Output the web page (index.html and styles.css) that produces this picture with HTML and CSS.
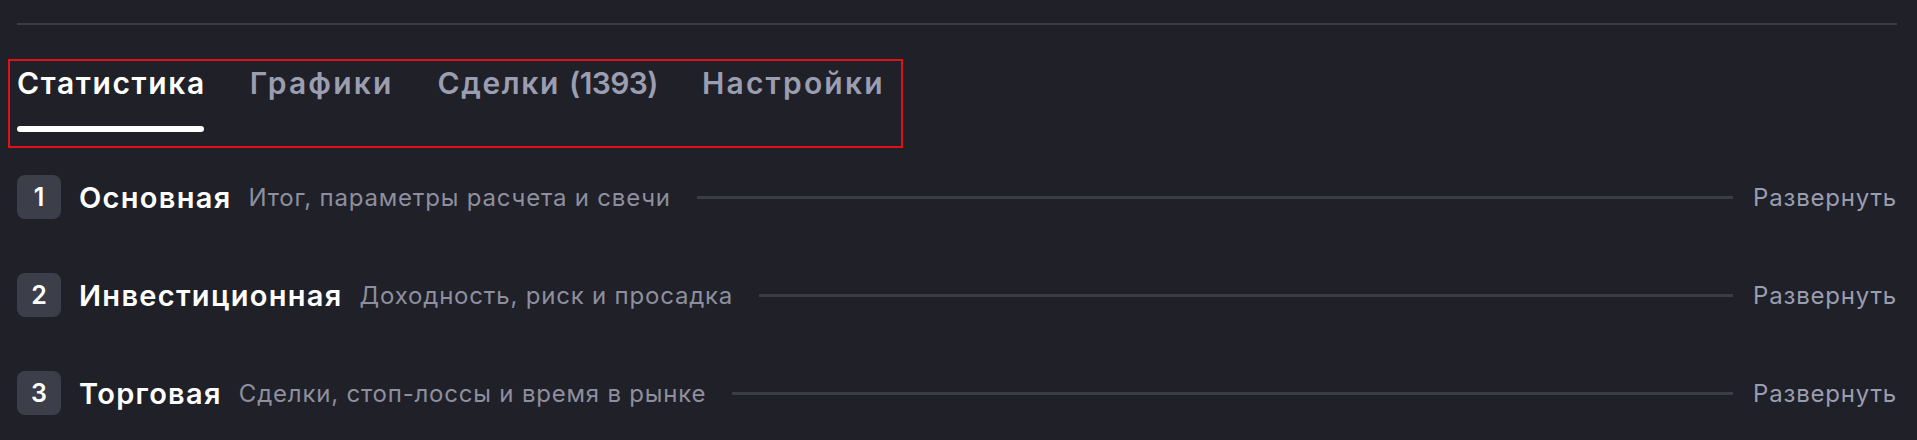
FILE: index.html
```html
<!DOCTYPE html>
<html lang="ru">
<head>
<meta charset="utf-8">
<title>Статистика</title>
<link rel="stylesheet" href="styles.css">
</head>
<body>
<div class="page">
  <div class="top-rule"></div>
  <nav class="tabs">
    <div class="tab active"><span class="tab-label">Статистика</span><span class="tab-bar"></span></div>
    <div class="tab"><span class="tab-label wide">Графики</span><span class="tab-bar"></span></div>
    <div class="tab"><span class="tab-label">Сделки <span class="count">(1393)</span></span><span class="tab-bar"></span></div>
    <div class="tab"><span class="tab-label wide">Настройки</span><span class="tab-bar"></span></div>
  </nav>
  <div class="sections">
    <div class="section">
      <span class="badge">1</span>
      <span class="title">Основная</span>
      <span class="subtitle">Итог, параметры расчета и свечи</span>
      <span class="rule"></span>
      <span class="expand">Развернуть</span>
    </div>
    <div class="section">
      <span class="badge">2</span>
      <span class="title">Инвестиционная</span>
      <span class="subtitle">Доходность, риск и просадка</span>
      <span class="rule"></span>
      <span class="expand">Развернуть</span>
    </div>
    <div class="section">
      <span class="badge">3</span>
      <span class="title">Торговая</span>
      <span class="subtitle">Сделки, стоп-лоссы и время в рынке</span>
      <span class="rule"></span>
      <span class="expand">Развернуть</span>
    </div>
  </div>
</div>
</body>
</html>
```

FILE: styles.css
```css
* { box-sizing: border-box; }
html, body {
  margin: 0;
  background: #1f2028;
  height: 100%;
}
body {
  font-family: Inter, "Noto Sans", sans-serif;
  color: #ffffff;
  overflow: hidden;
}
.page {
  padding: 23px 20px 0 17px;
}
.top-rule {
  height: 2px;
  background: #3b3c45;
}
.tabs {
  display: inline-flex;
  gap: 44px;
  margin: 34px 0 0 -9px;
  padding: 5px 16px 14px 7px;
  border: 2px solid #e0101a;
}
.tab {
  display: flex;
  flex-direction: column;
  gap: 26px;
}
.tab-label {
  font-size: 30px;
  line-height: 34px;
  font-weight: 600;
  letter-spacing: 1.6px;
  color: #9b9db0;
  white-space: nowrap;
}
.tab-label.wide {
  letter-spacing: 2.2px;
}
.count {
  letter-spacing: -0.6px;
}
.tab-bar {
  height: 6px;
  margin-right: 1.6px;
  border-radius: 3px;
  background: transparent;
}
.tab.active .tab-label { color: #ffffff; }
.tab.active .tab-bar { background: #ffffff; }

.sections {
  display: flex;
  flex-direction: column;
}
.section {
  display: flex;
  align-items: center;
  height: 98px;
}
.badge {
  width: 44px;
  height: 44px;
  border-radius: 8px;
  background: #3c3e49;
  color: #ffffff;
  font-size: 25px;
  font-weight: 600;
  display: flex;
  align-items: center;
  justify-content: center;
  flex: none;
}
.title {
  margin-left: 18px;
  font-size: 29px;
  font-weight: 600;
  letter-spacing: 1.3px;
  color: #ffffff;
  white-space: nowrap;
}
.subtitle {
  margin-left: 17px;
  font-size: 24px;
  letter-spacing: 0.8px;
  color: #8d8f9f;
  white-space: nowrap;
}
.rule {
  flex: 1;
  height: 3px;
  margin: 0 20px 0 26px;
  background: #3a3c46;
}
.expand {
  font-size: 24px;
  letter-spacing: 0.8px;
  color: #9a9db0;
  white-space: nowrap;
}
```
